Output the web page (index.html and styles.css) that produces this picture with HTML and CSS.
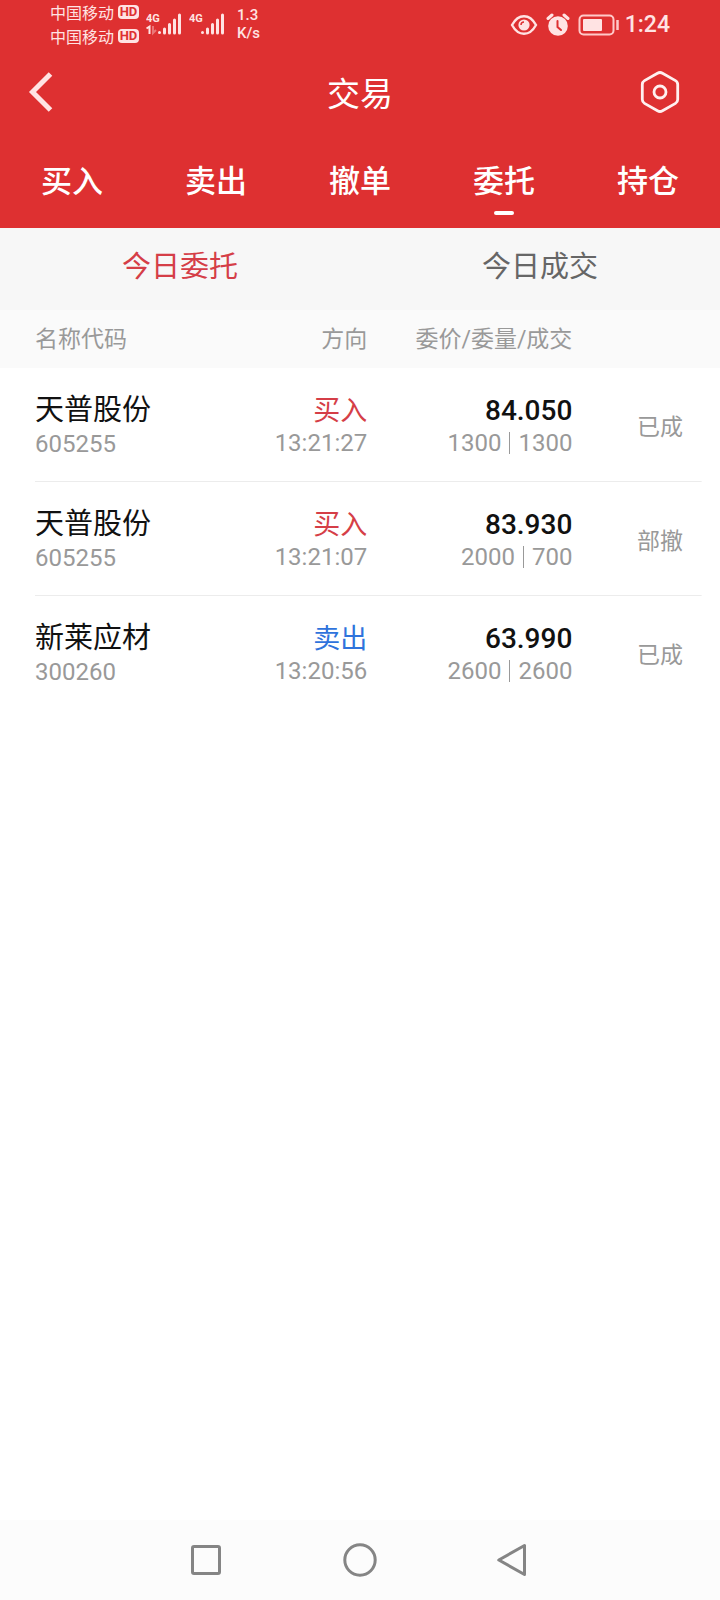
FILE: index.html
```html
<!DOCTYPE html>
<html lang="zh-CN">
<head>
<meta charset="utf-8">
<meta name="viewport" content="width=device-width, initial-scale=1">
<title>交易</title>
<link rel="stylesheet" href="styles.css">
</head>
<body>
<header class="top">
  <div class="status">
    <div class="carriers">
      <div class="carrier">中国移动<span class="hd">HD</span></div>
      <div class="carrier">中国移动<span class="hd">HD</span></div>
    </div>
    <svg class="signal" width="36" height="24" viewBox="0 0 36 24" aria-hidden="true">
      <text x="0" y="10" class="net">4G</text>
      <path d="M0.500 16.500l3-2v7.500" class="thin"/>
      <path d="M7 14v7l3-3" class="thin faint"/>
      <path d="M13.500 20.500v0M18.500 17v4M23.500 12.500v8.500M28.500 8v13M33.500 3v18" class="bars"/>
    </svg>
    <svg class="signal" width="36" height="24" viewBox="0 0 36 24" aria-hidden="true">
      <text x="0" y="10" class="net">4G</text>
      <path d="M13.500 20.500v0M18.500 17v4M23.500 12.500v8.500M28.500 8v13M33.500 3v18" class="bars"/>
    </svg>
    <div class="speed">1.3<br>K/s</div>
    <div class="system">
      <svg width="28" height="24" viewBox="0 0 28 24" aria-hidden="true">
        <path d="M2 12C5 6.500 9 3.200 14 3.200S23 6.500 26 12C23 17.500 19 20.800 14 20.800S5 17.500 2 12Z" fill="none" stroke="#ffe3e3" stroke-width="2.400"/>
        <circle cx="14" cy="12" r="5.600" fill="#ffe3e3"/>
        <path d="M11 12a3 3 0 0 1 3-3" fill="none" stroke="#de3031" stroke-width="1.500"/>
      </svg>
      <svg width="24" height="24" viewBox="0 0 24 24" aria-hidden="true">
        <circle cx="12" cy="13" r="9.800" fill="#ffe3e3"/>
        <path d="M2 5.500L6 2M22 5.500L18 2" stroke="#ffe3e3" stroke-width="3" stroke-linecap="round"/>
        <path d="M11.500 8v6l3.500 3" fill="none" stroke="#de3031" stroke-width="2" stroke-linecap="round"/>
      </svg>
      <svg class="battery" width="42" height="24" viewBox="0 0 42 24" aria-hidden="true">
        <rect x="1.500" y="2.500" width="34" height="19" rx="4" fill="none" stroke="#ffc9c9" stroke-width="2"/>
        <rect x="5" y="6" width="19" height="12" rx="1" fill="#ffe3e3"/>
        <path d="M39.500 7v10" stroke="#ffc9c9" stroke-width="2.500"/>
      </svg>
      <span class="clock">1:24</span>
    </div>
  </div>
  <div class="bar">
    <button class="icon" aria-label="返回">
      <svg width="26" height="42" viewBox="0 0 26 42"><path d="M22.500 3L4.500 21L22.500 39" fill="none" stroke="#ffe3e3" stroke-width="5"/></svg>
    </button>
    <h1 class="title">交易</h1>
    <button class="icon" aria-label="设置">
      <svg width="40" height="42" viewBox="0 0 40 42" fill="none" stroke="#fff0f0" stroke-width="2.800" stroke-linejoin="round">
        <path d="M17.500 2.200q2.500-1.400 5 0l13 7.400q2.200 1.300 2.200 3.900v15q0 2.600-2.200 3.900l-13 7.400q-2.500 1.400-5 0l-13-7.400q-2.200-1.300-2.200-3.900v-15q0-2.600 2.200-3.900z"/>
        <circle cx="20" cy="21" r="6"/>
      </svg>
    </button>
  </div>
  <nav class="tabs">
    <button class="tab">买入</button>
    <button class="tab">卖出</button>
    <button class="tab">撤单</button>
    <button class="tab active" aria-current="page">委托</button>
    <button class="tab">持仓</button>
  </nav>
</header>
<main class="content">
  <div class="subtabs">
    <button class="subtab selected">今日委托</button>
    <button class="subtab">今日成交</button>
  </div>
  <table class="orders">
    <thead>
      <tr><th class="c-name">名称代码</th><th class="c-side">方向</th><th class="c-price">委价/委量/成交</th><th class="c-state"></th></tr>
    </thead>
    <tbody>
      <tr>
        <td><div class="name">天普股份</div><div class="code">605255</div></td>
        <td><div class="side buy">买入</div><div class="sub">13:21:27</div></td>
        <td><div class="price">84.050</div><div class="sub">1300<i class="sep"></i>1300</div></td>
        <td>已成</td>
      </tr>
      <tr>
        <td><div class="name">天普股份</div><div class="code">605255</div></td>
        <td><div class="side buy">买入</div><div class="sub">13:21:07</div></td>
        <td><div class="price">83.930</div><div class="sub">2000<i class="sep"></i>700</div></td>
        <td>部撤</td>
      </tr>
      <tr>
        <td><div class="name">新莱应材</div><div class="code">300260</div></td>
        <td><div class="side sell">卖出</div><div class="sub">13:20:56</div></td>
        <td><div class="price">63.990</div><div class="sub">2600<i class="sep"></i>2600</div></td>
        <td>已成</td>
      </tr>
    </tbody>
  </table>
</main>
<footer class="keys">
  <button class="icon" aria-label="最近任务"><svg width="34" height="34" viewBox="0 0 34 34"><rect x="3.500" y="3.500" width="27" height="27" rx="1.500"/></svg></button>
  <button class="icon" aria-label="主页"><svg width="34" height="34" viewBox="0 0 34 34"><circle cx="17" cy="17" r="15.200"/></svg></button>
  <button class="icon" aria-label="后退"><svg width="34" height="34" viewBox="0 0 34 34"><path d="M27.500 2.500v29L1.800 17z" stroke-linejoin="round"/></svg></button>
</footer>
</body>
</html>
```
FILE: styles.css
```css
* { box-sizing: border-box; }

body {
  margin: 0;
  min-height: 100vh;
  display: flex;
  flex-direction: column;
  background: #fff;
  font-family: Roboto, "Noto Sans CJK SC", sans-serif;
}

button {
  border: 0;
  padding: 0;
  background: none;
  color: inherit;
  font: inherit;
}

svg { display: block; }

.top {
  background: #de3031;
  color: #fff;
}

.status {
  display: flex;
  align-items: flex-start;
  height: 50px;
  padding: 0 50px;
  color: #ffe3e3;
}

.carrier {
  display: flex;
  align-items: center;
  gap: 4px;
  height: 24px;
  font-size: 16px;
}

.hd {
  width: 21px;
  border-radius: 4px;
  background: #ffe3e3;
  color: #de3031;
  font-size: 13px;
  font-weight: 700;
  line-height: 14px;
  text-align: center;
}

.signal { margin: 12px 0 0 7px; }
.net { font-size: 11px; font-weight: 700; fill: #ffe3e3; }
.bars { stroke: #ffe3e3; stroke-width: 3; stroke-linecap: round; fill: none; }
.thin { stroke: #ffe3e3; stroke-width: 2; fill: none; }
.faint { opacity: 0.4; }

.speed {
  margin: 6px 0 0 12px;
  font-size: 15px;
  font-weight: 500;
  line-height: 18px;
}

.system {
  display: flex;
  align-items: center;
  gap: 8px;
  margin: 12px 0 0 auto;
}

.clock {
  margin-left: -3px;
  font-size: 23px;
  font-weight: 500;
  line-height: 26px;
}

.bar {
  display: flex;
  align-items: center;
  justify-content: space-between;
  height: 84px;
  padding: 0 40px 0 28px;
}

.title {
  flex: 1;
  margin: 0;
  padding-left: 26px;
  font-size: 33px;
  font-weight: 400;
  text-align: center;
}

.tabs {
  display: flex;
  height: 94px;
}

.tab {
  position: relative;
  flex: 1;
  padding-bottom: 5px;
  font-size: 31px;
  font-weight: 500;
}

.tab.active::after {
  content: "";
  position: absolute;
  left: calc(50% - 10px);
  bottom: 13px;
  width: 20px;
  height: 4px;
  border-radius: 2px;
  background: #fff;
}

.content { flex: 1; }

.subtabs {
  display: flex;
  height: 82px;
  padding-bottom: 10px;
  background: #f7f7f7;
}

.subtab {
  flex: 1;
  color: #666;
  font-size: 29px;
}

.subtab.selected { color: #d53e47; }

.orders {
  width: 100%;
  table-layout: fixed;
  border-collapse: collapse;
  color: #999;
  font-size: 23px;
  text-align: right;
}

.orders thead { background: #fafafa; }

.orders th {
  height: 58px;
  padding: 0 0 5px;
  font-weight: 400;
}

.c-name { width: 34%; }
.c-side { width: 17%; }
.c-price { width: 28.5%; }

.orders th:first-child,
.orders td:first-child {
  padding-left: 35px;
  text-align: left;
}

.orders td {
  height: 114px;
  padding: 0;
}

.orders td:first-child { padding-top: 2px; }

.orders td:last-child { padding-right: 37px; }

.orders tbody tr:not(:last-child) {
  background: linear-gradient(#ececec, #ececec) 35px 100% / calc(100% - 53px) 1px no-repeat;
}

.name {
  color: #111;
  font-size: 29px;
  line-height: 36px;
}

.code {
  font-size: 24px;
  line-height: 32px;
}

.sub {
  padding-bottom: 2px;
  font-size: 24px;
  line-height: 26px;
}

.side {
  font-size: 27px;
  line-height: 38px;
}

.buy { color: #d53e47; }
.sell { color: #2f73dc; }

.price {
  color: #111;
  font-size: 28px;
  font-weight: 500;
  line-height: 38px;
}

.sep {
  display: inline-block;
  width: 1px;
  height: 22px;
  margin: 0 8px;
  background: #999;
  vertical-align: -3px;
}

.keys {
  display: flex;
  align-items: center;
  justify-content: center;
  gap: 120px;
  height: 80px;
  background: #fcfcfc;
}

.keys svg {
  fill: none;
  stroke: #858585;
  stroke-width: 3;
}
```
